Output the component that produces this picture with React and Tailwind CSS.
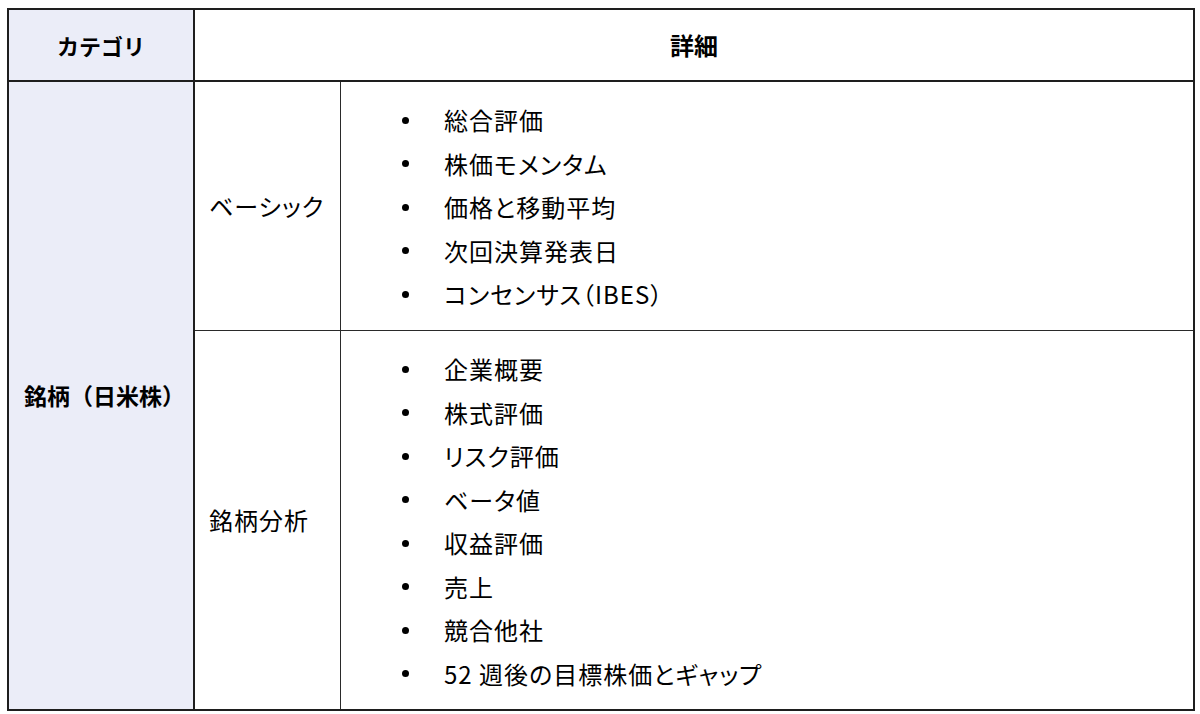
const basic = ['総合評価', '株価モメンタム', '価格と移動平均', '次回決算発表日', 'コンセンサス（IBES）'];
const analysis = ['企業概要', '株式評価', 'リスク評価', 'ベータ値', '収益評価', '売上', '競合他社', '52 週後の目標株価とギャップ'];

function Bullets({ items }) {
    return (
        <ul className="flex flex-col gap-[19.5px]">
            {items.map((t) => (
                <li key={t} className="flex items-center h-[24px]">
                    <span className="w-[103px] flex pl-[61px]">
                        <span className="w-[7px] h-[7px] rounded-full bg-black" />
                    </span>
                    <span className="tracking-[1px] [font-feature-settings:'palt']">{t}</span>
                </li>
            ))}
        </ul>
    );
}

export default function App() {
    return (
        <div
            className="w-[1200px] h-[714px] bg-white pt-[8px] pl-[7px] text-black text-[24px] leading-none overflow-hidden"
            style={{ fontFamily: '"Noto Sans CJK JP", "Noto Sans", sans-serif' }}
        >
            <div className="w-[1188px] border-2 border-[#1e1e1e]">
                {/* Header */}
                <div className="flex h-[72px] border-b-2 border-[#1e1e1e]">
                    <div className="w-[186px] bg-[#ebedf8] flex items-center justify-center font-bold text-[22px] border-r-2 border-[#1e1e1e]">
                        カテゴリ
                    </div>
                    <div className="flex-1 flex items-center justify-center font-bold">詳細</div>
                </div>

                {/* Body */}
                <div className="flex">
                    <div className="w-[186px] bg-[#ebedf8] flex items-center pl-[15px] font-bold text-[23px] border-r-2 border-[#1e1e1e]">
                        銘柄（日米株）
                    </div>
                    <div className="flex-1 flex flex-col">
                        <div className="flex h-[249px] border-b-[1.5px] border-[#2a2a2a]">
                            <div className="w-[146px] flex items-center pl-[14px] tracking-[1px] [font-feature-settings:'palt'] border-r-[1.5px] border-[#2a2a2a]">
                                ベーシック
                            </div>
                            <div className="flex-1 pt-[26px]">
                                <Bullets items={basic} />
                            </div>
                        </div>
                        <div className="flex h-[378px]">
                            <div className="w-[146px] flex items-center pl-[14px] tracking-[1px] [font-feature-settings:'palt'] border-r-[1.5px] border-[#2a2a2a]">
                                銘柄分析
                            </div>
                            <div className="flex-1 pt-[26px]">
                                <Bullets items={analysis} />
                            </div>
                        </div>
                    </div>
                </div>
            </div>
        </div>
    );
}
